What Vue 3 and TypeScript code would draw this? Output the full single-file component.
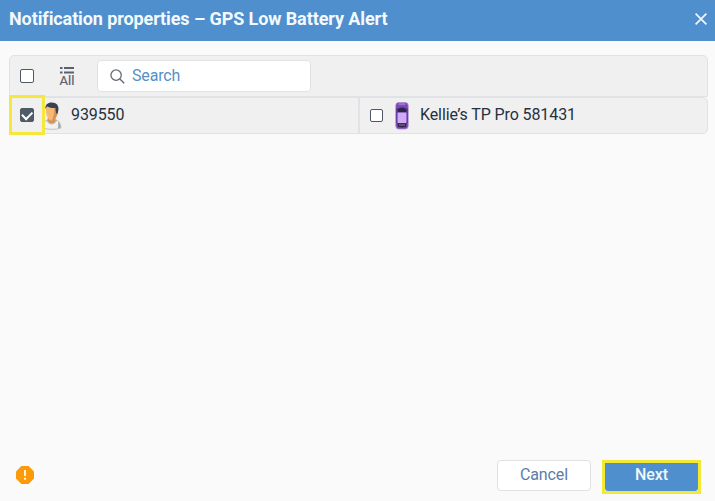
<script setup lang="ts">
import { ref } from 'vue'

const title = 'Notification properties – GPS Low Battery Alert'
const allSelected = ref(false)
const personSelected = ref(true)
const trackerSelected = ref(false)
const query = ref('')
</script>

<template>
  <div class="dialog">
    <header class="header">
      <h1 class="title">{{ title }}</h1>
      <button class="close" aria-label="Close">
        <svg width="12" height="12" viewBox="0 0 12 12">
          <path d="M.6.6l10.8 10.8M11.4.6L.6 11.4" fill="none" stroke="#f3fafe" stroke-width="1.7" />
        </svg>
      </button>
    </header>

    <main class="content">
      <div class="toolbar">
        <input v-model="allSelected" type="checkbox" class="check" />
        <button class="all">
          <svg width="14" height="7" viewBox="0 0 14 7">
            <path d="M0 1h2.5M4 1h10M0 5.5h2.5M4 5.5h10" fill="none" stroke="#59616e" stroke-width="2" />
          </svg>
          <span>All</span>
        </button>
        <label class="search">
          <svg width="15" height="15" viewBox="0 0 15 15">
            <circle cx="6.1" cy="6.1" r="5.2" fill="none" stroke="#626a76" stroke-width="1.3" />
            <path d="M9.9 9.9l4.3 4.3" fill="none" stroke="#626a76" stroke-width="1.4" />
          </svg>
          <input v-model="query" type="text" placeholder="Search" />
        </label>
      </div>

      <div class="units">
        <div class="unit first">
          <span class="marked">
            <input v-model="personSelected" type="checkbox" class="check" />
          </span>
          <svg class="person" width="19" height="28" viewBox="0 0 19 28">
            <path d="M0 26c.2-4.500 1.600-7 4.500-8.200l8-.3c3.700 1.200 5.300 4 5.500 8.500-4.400 1.800-13.500 1.800-18 0z" fill="#f1f1f1" stroke="#b0b0b0" stroke-width=".7" />
            <path d="M5 15h7l.8 3.500c-.9 4-6.900 4-8.300 0z" fill="#dc9150" />
            <path d="M3.800 18c1.200 5 8.200 5.400 9.700.1" fill="none" stroke="#aaa" stroke-width=".9" />
            <path d="M15.300 19.500c1.500 1.500 2.200 3.500 2.300 6.200l-2.600.7z" fill="#a7a7a7" />
            <path d="M3 6c0-3 2-4.500 5.500-4.500S14.800 4 14.600 9c-.2 5-2.600 9.500-5.900 9.500S3 13.500 3 9.500z" fill="#f4b877" />
            <path d="M10.500 6c2 4-.3 8.500-1.300 12.300 3.300-.3 5.300-4.500 5.400-9.300z" fill="#dc8f4d" />
            <path d="M2.500 7C2 2.700 4.600.4 8.700.4c4.800 0 7.400 3 6.700 7.600l-1 4.200-1.300-1.200-.8-5C8.500 6.200 5.500 5.500 4 4.200z" fill="#344252" />
          </svg>
          <span class="name">939550</span>
        </div>
        <div class="unit second">
          <input v-model="trackerSelected" type="checkbox" class="check small" />
          <svg class="car" width="14" height="28" viewBox="0 0 14 28">
            <rect x=".8" y=".5" width="12.4" height="26.5" rx="3" fill="#7846b8" stroke="#a98dcc" stroke-width=".8" />
            <path d="M3.5 2.2h7" stroke="#a06ee0" stroke-width="2" />
            <path d="M2 7.5q5-4 10 0l-1 3H3z" fill="#302546" />
            <rect x="2.5" y="10.5" width="9" height="10.500" rx="1" fill="#cfabf3" />
            <path d="M2.4 21.2h9.200l-.6 3.500q-4 1.500-8 0z" fill="#34244b" />
            <path d="M4 23h6" stroke="#8f75a6" />
            <path d="M1.700 6v15M12.300 6v15" stroke="#5c2e93" stroke-width=".8" fill="none" />
          </svg>
          <span class="name">Kellie’s TP Pro 581431</span>
        </div>
      </div>
    </main>

    <footer class="footer">
      <svg class="alert" width="18" height="18" viewBox="0 0 18 18">
        <path d="M5.4 0h7.200L18 5.400v7.200L12.600 18H5.400L0 12.600V5.400z" fill="#fb9b0c" />
        <path d="M9 4v6M9 11.700v2" stroke="#fff4dc" stroke-width="2" />
      </svg>
      <button class="button cancel">Cancel</button>
      <span class="next-frame"><button class="button next">Next</button></span>
    </footer>
  </div>
</template>

<style>
body {
  overflow: hidden;
  background: #fafafa;
}
</style>

<style scoped>
.dialog {
  height: 501px;
  display: flex;
  flex-direction: column;
  background: #fafafa;
  color: #27303e;
  font: 16px/20px Roboto, sans-serif;
}

.dialog * {
  box-sizing: border-box;
}

button {
  padding: 0;
  border: 0;
  background: none;
  font: inherit;
}

.header {
  height: 41px;
  padding: 0 8px 3px 9px;
  display: flex;
  align-items: center;
  justify-content: space-between;
  background: #4f8fcd;
}

.title {
  margin: 0;
  color: #f3fafe;
  font-size: 18px;
  font-weight: 700;
  line-height: 22px;
  letter-spacing: -0.1px;
}

.close {
  width: 12px;
  height: 12px;
  display: flex;
}

.content {
  flex: 1;
  padding: 14px 7px 0 9px;
}

.toolbar {
  height: 42px;
  padding-left: 10px;
  display: flex;
  align-items: center;
  border: 1px solid #e0e2e5;
  border-radius: 5px 5px 0 0;
  background: #f0f0f0;
}

.check {
  appearance: none;
  flex: none;
  width: 14px;
  height: 14px;
  margin: 0;
  border: 1px solid #4f5866;
  border-radius: 2px;
  background: #fff;
}

.check:checked {
  background: #515a68;
  display: flex;
  align-items: center;
  justify-content: center;
}

.check:checked::after {
  content: '';
  width: 8px;
  height: 4.5px;
  margin-bottom: 2px;
  border-left: 2px solid #fff;
  border-bottom: 2px solid #fff;
  transform: rotate(-45deg);
}

.check.small {
  width: 13px;
  height: 13px;
}

.all {
  width: 14px;
  margin: 2px 0 0 26px;
  display: flex;
  flex-direction: column;
  align-items: center;
  color: #59616e;
  font-size: 13px;
  line-height: 13px;
}

.all svg {
  flex: none;
}

.all span {
  -webkit-text-stroke: 0.2px #59616e;
}

.search {
  width: 214px;
  height: 32px;
  margin-left: 23px;
  padding-left: 12px;
  display: flex;
  align-items: center;
  gap: 7px;
  border: 1px solid #e0e3e6;
  border-radius: 4px;
  background: #fff;
}

.search input {
  width: 170px;
  height: 24px;
  padding: 0 0 2px;
  border: 0;
  outline: 0;
  background: transparent;
  font: inherit;
  letter-spacing: -0.15px;
}

.search input::placeholder {
  color: #5590c8;
  opacity: 1;
}

.units {
  height: 37px;
  display: flex;
  border: 1px solid #e0e2e5;
  border-radius: 0 5px 5px 5px;
  background: #f0f0f0;
}

.unit {
  display: flex;
  align-items: center;
}

.first {
  width: 350px;
  border-right: 2px solid #e0e2e5;
}

.marked {
  flex: none;
  width: 36px;
  height: 40px;
  margin: 0 0 2px -1px;
  padding-top: 1px;
  display: flex;
  align-items: center;
  justify-content: center;
  border: 3px solid #f5e83a;
  position: relative;
  z-index: 1;
}

.person {
  margin-left: -2px;
}

.name {
  padding-bottom: 2px;
  letter-spacing: -0.1px;
}

.first .name {
  margin-left: 9px;
}

.second {
  padding-left: 10px;
}

.car {
  margin-left: 12px;
}

.second .name {
  margin-left: 11px;
}

.footer {
  height: 41px;
  padding: 0 14px 0 16px;
  display: flex;
  align-items: flex-start;
}

.alert {
  margin: 6px auto 0 0;
}

.button {
  height: 31px;
  padding-bottom: 2px;
  border-radius: 4px;
}

.cancel {
  width: 94px;
  border: 1px solid #dfe2e5;
  background: #fff;
  color: #5b7bab;
  letter-spacing: -0.1px;
}

.next-frame {
  margin-left: 11px;
  width: 99px;
  height: 34px;
  display: flex;
  border: 3px solid #f1e936;
}

.next {
  width: 93px;
  height: 28px;
  padding-bottom: 4px;
  border-radius: 0 0 3px 3px;
  background: #4f8fcd;
  color: #f0f8fd;
  font-weight: 500;
  letter-spacing: -0.1px;
}
</style>
